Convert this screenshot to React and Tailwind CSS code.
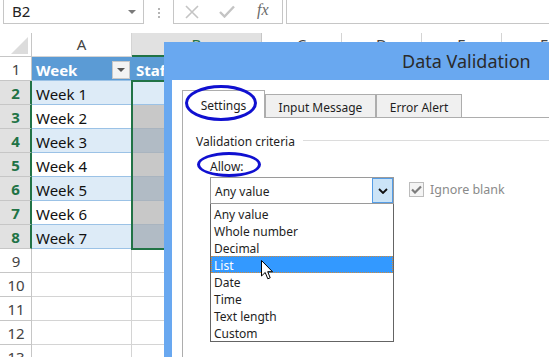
import React from "react";

const ROWS = [
  { n: 1, a: "Week", b: "Staff", head: true },
  { n: 2, a: "Week 1", band: true, sel: true },
  { n: 3, a: "Week 2", sel: true },
  { n: 4, a: "Week 3", band: true, sel: true },
  { n: 5, a: "Week 4", sel: true },
  { n: 6, a: "Week 5", band: true, sel: true },
  { n: 7, a: "Week 6", sel: true },
  { n: 8, a: "Week 7", band: true, sel: true },
  { n: 9 },
  { n: 10 },
  { n: 11 },
  { n: 12 },
  { n: 13 },
];

const OPTIONS = ["Any value", "Whole number", "Decimal", "List", "Date", "Time", "Text length", "Custom"];

const FormulaBar = () => (
  <div className="flex h-[24px] items-stretch">
    <div className="ml-[3px] w-[141px] border-x border-b border-[#c6c6c6] flex items-center justify-between pl-[8px] pr-[7px]">
      <span className="text-[15px] text-[#222]">B2</span>
      <span className="w-0 h-0 border-x-[4px] border-x-transparent border-t-[4px] border-t-[#7a7a7a]" />
    </div>
    <div className="ml-[14px] flex flex-col justify-center gap-[2px] pt-[1px]">
      <span className="w-[2px] h-[2px] bg-[#b5b5b5]" />
      <span className="w-[2px] h-[2px] bg-[#b5b5b5]" />
      <span className="w-[2px] h-[2px] bg-[#b5b5b5]" />
    </div>
    <div className="ml-[13px] w-[110px] border-x border-b border-[#c6c6c6] flex items-center pl-[11px] gap-[20px]">
      <svg width="14" height="14" viewBox="0 0 14 14">
        <path d="M1 1 L13 13 M13 1 L1 13" stroke="#c4c4c4" strokeWidth="1.6" fill="none" />
      </svg>
      <svg width="16" height="13" viewBox="0 0 16 13">
        <path d="M1 7 L5.5 11.5 L15 1.5" stroke="#c4c4c4" strokeWidth="2.4" fill="none" />
      </svg>
      <span className="font-['Liberation_Serif',serif] italic text-[16px] text-[#6a6a6a] -mt-[3px] ml-[2px]">fx</span>
    </div>
    <div className="ml-[3px] flex-1 border-l border-b border-[#c6c6c6]" />
  </div>
);

const HeaderRow = () => (
  <div className="flex h-[24px] text-[15px] text-[#444]">
    <div className="w-[32px] shrink-0 border-r border-b border-[#c6c6c6] relative">
      <svg className="absolute left-[11px] top-[4px]" width="17" height="17" viewBox="0 0 17 17">
        <path d="M17 0 L17 17 L0 17 Z" fill="#dcdcdc" />
      </svg>
    </div>
    <div className="w-[100px] shrink-0 border-r border-b border-[#d4d4d4] flex items-center justify-center">A</div>
    <div className="w-[130px] shrink-0 bg-[#e1e1e1] border-r border-[#c6c6c6] border-b-2 border-b-[#217346] flex items-center justify-center text-[#217346]">B</div>
    <div className="w-[80px] shrink-0 border-r border-b border-[#d4d4d4] flex items-center justify-center">C</div>
    <div className="w-[80px] shrink-0 border-r border-b border-[#d4d4d4] flex items-center justify-center">D</div>
    <div className="w-[80px] shrink-0 border-r border-b border-[#d4d4d4] flex items-center justify-center">E</div>
    <div className="flex-1 border-b border-[#d4d4d4] flex items-center pl-[38px]">F</div>
  </div>
);

const SheetRow = ({ row }) => {
  const hdr = row.sel
    ? "bg-[#e1e1e1] text-[#217346] font-bold border-r-2 border-r-[#217346] border-b border-b-[#c6c6c6]"
    : "text-[#444] border-r border-b border-[#c6c6c6]";

  let aCls = "border-r border-b border-[#d4d4d4]";
  let bCls = "border-r border-b border-[#d4d4d4]";
  if (row.head) {
    aCls = "bg-[#5b9bd5] text-white font-bold border-b border-[#9bc2e6]";
    bCls = "bg-[#5b9bd5] text-white font-bold border-b border-[#9bc2e6]";
  } else if (row.a) {
    aCls = `${row.band ? "bg-[#ddebf7]" : "bg-white"} text-[#111] border-b border-[#9bc2e6]`;
    bCls =
      row.n === 2
        ? "bg-[#ddebf7] border-b border-[#9bc2e6]"
        : `${row.band ? "bg-[#b1bbc5]" : "bg-[#c8c8c8]"} border-b border-[#a9b4bf]`;
  }

  return (
    <div className="flex h-[24px] text-[15px]">
      <div className={`w-[32px] shrink-0 flex items-center justify-center pl-[1px] pt-[1px] ${hdr}`}>{row.n}</div>
      <div className={`w-[100px] shrink-0 relative flex items-center pl-[4px] pt-[3px] ${aCls}`}>
        {row.a}
        {row.head && (
          <span className="absolute right-[2px] top-[4px] w-[18px] h-[18px] bg-[#f3f3f3] border border-[#c8c8c8] flex items-center justify-center">
            <span className="w-0 h-0 border-x-[4px] border-x-transparent border-t-[4px] border-t-[#555]" />
          </span>
        )}
      </div>
      <div className={`w-[130px] shrink-0 flex items-center pl-[4px] pt-[3px] ${bCls}`}>{row.b}</div>
      <div className="flex-1 border-b border-[#d4d4d4]" />
    </div>
  );
};

const Dialog = () => (
  <div className="absolute left-[164px] top-[42px] w-[420px] h-[340px] bg-[#69a8f0] flex flex-col">
    <div className="h-[38px] flex items-center pl-[238px] pt-[1px] text-[18px] text-[#2b2b2b]">Data Validation</div>
    <div className="flex-1 ml-[8px] bg-white pt-[10px] pl-[10px] flex flex-col text-[12px] text-[#1e1e1e]">
      <div className="flex items-end h-[28px] -mb-px relative z-10">
        <div className="w-[83px] h-[28px] bg-white border-x border-t border-[#adadad] flex items-center justify-center pt-[3px]">Settings</div>
        <div className="w-[111px] h-[24px] bg-[#f0f0f0] border border-[#adadad] flex items-center justify-center pt-[3px]">Input Message</div>
        <div className="w-[86px] h-[24px] bg-[#f0f0f0] border border-[#adadad] flex items-center justify-center pt-[3px]">Error Alert</div>
      </div>
      <div className="flex-1 border-t border-l border-[#adadad] pl-[13px] pt-[16px]">
        <div className="flex items-center h-[16px]">
          <span>Validation criteria</span>
          <span className="flex-1 h-px bg-[#dcdcdc] ml-[8px] -mt-[3px]" />
        </div>
        <div className="pl-[14px] mt-[9px]">
          <div className="h-[16px] leading-[16px]">
            <span className="underline underline-offset-2">A</span>llow:
          </div>
          <div className="flex items-start mt-[2px]">
            <div className="flex flex-col w-[184px]">
              <div className="h-[27px] border border-[#9a9a9a] flex items-stretch">
                <div className="flex-1 flex items-center pl-[4px] pt-[2px]">Any value</div>
                <div className="w-[21px] bg-[#cce4f7] border border-[#569de5] flex items-center justify-center">
                  <svg width="10" height="6" viewBox="0 0 10 6">
                    <path d="M1 1 L5 5 L9 1" stroke="#111" strokeWidth="1.8" fill="none" />
                  </svg>
                </div>
              </div>
              <div className="border-x border-b border-[#646464] pt-px">
                {OPTIONS.map((o) =>
                  o === "List" ? (
                    <div key={o} className="h-[17px] bg-[#3399ff] text-white pl-[2px] pt-[2px] border border-dotted border-[#d08a3c] flex items-center">
                      {o}
                    </div>
                  ) : (
                    <div key={o} className="h-[17px] pl-[3px] pt-[2px] flex items-center">
                      {o}
                    </div>
                  )
                )}
              </div>
            </div>
            <div className="ml-[15px] mt-[3px] flex items-center gap-[6px]">
              <span className="w-[15px] h-[15px] border border-[#bcbcbc] bg-[#f4f4f4] flex items-center justify-center">
                <svg width="11" height="9" viewBox="0 0 11 9">
                  <path d="M1 4.5 L4 7.5 L10 1.5" stroke="#7c7c7c" strokeWidth="2.2" fill="none" />
                </svg>
              </span>
              <span className="text-[#8a8a8a] text-[12.5px] pt-[1px]">Ignore blank</span>
            </div>
          </div>
        </div>
      </div>
    </div>
  </div>
);

export default function App() {
  return (
    <div className="relative w-[549px] h-[357px] overflow-hidden bg-white font-['Noto_Sans',sans-serif]">
      <FormulaBar />
      <div className="h-[9px]" />
      <HeaderRow />
      {ROWS.map((r) => (
        <SheetRow key={r.n} row={r} />
      ))}
      <div className="absolute left-[131px] top-[80px] w-[134px] h-[170px] border-2 border-[#217346]" />
      <Dialog />
      <div className="absolute z-20 left-[185px] top-[85px] w-[72px] h-[36px] rounded-[50%] border-[3px] border-[#1010d0]" />
      <div className="absolute z-20 left-[197px] top-[152px] w-[64px] h-[25px] rounded-[50%] border-[3px] border-[#1010d0]" />
      <svg className="absolute z-20 left-[261px] top-[260px]" width="13" height="21" viewBox="0 0 13 21">
        <path d="M0.5 0.5 L0.5 16 L4.2 12.5 L6.8 18.8 L9.2 17.8 L6.7 11.7 L11.5 11.7 Z" fill="#fff" stroke="#000" strokeWidth="1" strokeLinejoin="miter" />
      </svg>
    </div>
  );
}
